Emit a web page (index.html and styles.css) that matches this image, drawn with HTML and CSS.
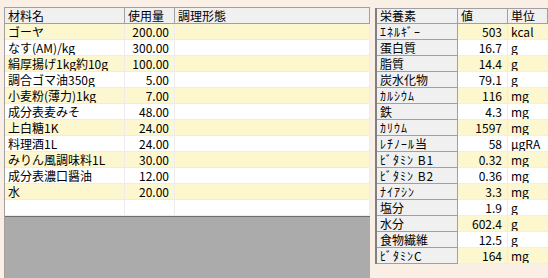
FILE: index.html
```html
<!DOCTYPE html>
<html lang="ja">
<head>
    <meta charset="UTF-8">
    <title>材料と栄養素</title>
    <link rel="stylesheet" href="styles.css">
</head>
<body>
    <div class="page">
        <div class="materials">
            <div class="mat-head">
                <div class="cell">材料名</div>
                <div class="cell">使用量</div>
                <div class="cell">調理形態</div>
            </div>
            <div class="mat-row alt"><div class="cell">ゴーヤ</div><div class="cell num">200.00</div><div class="cell"></div></div>
            <div class="mat-row"><div class="cell">なす(AM)/kg</div><div class="cell num">300.00</div><div class="cell"></div></div>
            <div class="mat-row alt"><div class="cell">絹厚揚げ1kg約10g</div><div class="cell num">100.00</div><div class="cell"></div></div>
            <div class="mat-row"><div class="cell">調合ゴマ油350g</div><div class="cell num">5.00</div><div class="cell"></div></div>
            <div class="mat-row alt"><div class="cell">小麦粉(薄力)1kg</div><div class="cell num">7.00</div><div class="cell"></div></div>
            <div class="mat-row"><div class="cell">成分表麦みそ</div><div class="cell num">48.00</div><div class="cell"></div></div>
            <div class="mat-row alt"><div class="cell">上白糖1K</div><div class="cell num">24.00</div><div class="cell"></div></div>
            <div class="mat-row"><div class="cell">料理酒1L</div><div class="cell num">24.00</div><div class="cell"></div></div>
            <div class="mat-row alt"><div class="cell">みりん風調味料1L</div><div class="cell num">30.00</div><div class="cell"></div></div>
            <div class="mat-row"><div class="cell">成分表濃口醤油</div><div class="cell num">12.00</div><div class="cell"></div></div>
            <div class="mat-row alt"><div class="cell">水</div><div class="cell num">20.00</div><div class="cell"></div></div>
            <div class="mat-row"><div class="cell"></div><div class="cell num"></div><div class="cell"></div></div>
            <div class="mat-blank"></div>
        </div>

        <div class="nutrients">
            <div class="nut-head">
                <div class="cell">栄養素</div>
                <div class="cell">値</div>
                <div class="cell">単位</div>
            </div>
            <div class="nut-row alt"><div class="cell name hw">ｴﾈﾙｷﾞｰ</div><div class="cell num">503</div><div class="cell">kcal</div></div>
            <div class="nut-row"><div class="cell name">蛋白質</div><div class="cell num">16.7</div><div class="cell">g</div></div>
            <div class="nut-row alt"><div class="cell name">脂質</div><div class="cell num">14.4</div><div class="cell">g</div></div>
            <div class="nut-row"><div class="cell name">炭水化物</div><div class="cell num">79.1</div><div class="cell">g</div></div>
            <div class="nut-row alt"><div class="cell name hw">ｶﾙｼｳﾑ</div><div class="cell num">116</div><div class="cell">mg</div></div>
            <div class="nut-row"><div class="cell name">鉄</div><div class="cell num">4.3</div><div class="cell">mg</div></div>
            <div class="nut-row alt"><div class="cell name hw">ｶﾘｳﾑ</div><div class="cell num">1597</div><div class="cell">mg</div></div>
            <div class="nut-row"><div class="cell name hw">ﾚﾁﾉｰﾙ当</div><div class="cell num">58</div><div class="cell">μgRA</div></div>
            <div class="nut-row alt"><div class="cell name hw">ﾋﾞﾀﾐﾝ B1</div><div class="cell num">0.32</div><div class="cell">mg</div></div>
            <div class="nut-row"><div class="cell name hw">ﾋﾞﾀﾐﾝ B2</div><div class="cell num">0.36</div><div class="cell">mg</div></div>
            <div class="nut-row alt"><div class="cell name hw">ﾅｲｱｼﾝ</div><div class="cell num">3.3</div><div class="cell">mg</div></div>
            <div class="nut-row"><div class="cell name">塩分</div><div class="cell num">1.9</div><div class="cell">g</div></div>
            <div class="nut-row alt"><div class="cell name">水分</div><div class="cell num">602.4</div><div class="cell">g</div></div>
            <div class="nut-row"><div class="cell name">食物繊維</div><div class="cell num">12.5</div><div class="cell">g</div></div>
            <div class="nut-row alt"><div class="cell name hw">ﾋﾞﾀﾐﾝC</div><div class="cell num">164</div><div class="cell">mg</div></div>
        </div>
    </div>
</body>
</html>
```

FILE: styles.css
```css
* {
    margin: 0;
    padding: 0;
    box-sizing: border-box;
}

body {
    background: #f9efe5;
    font-family: "MS UI Gothic", "Noto Sans CJK JP", sans-serif;
    font-size: 12px;
    color: #000;
}

.page {
    display: flex;
    gap: 5px;
    height: 278px;
    padding: 7px 0 0 4px;
    overflow: hidden;
}

.cell {
    height: 15px;
    line-height: 15px;
    padding: 0 3px;
    white-space: nowrap;
    overflow: hidden;
}

.num {
    text-align: right;
    padding-right: 5px;
}

.hw {
    letter-spacing: 1px;
}

/* materials list */

.materials {
    width: 366px;
    display: flex;
    flex-direction: column;
    border-left: 1px solid #a0a0a0;
    background: #fff;
}

.mat-head,
.mat-row {
    display: grid;
    grid-template-columns: 120px 50px 1fr;
}

.mat-head {
    background: #f0f0f0;
    border-top: 1px solid #a0a0a0;
    border-bottom: 1px solid #a0a0a0;
    border-right: 1px solid #a0a0a0;
}

.mat-head .cell {
    border-right: 1px solid #a0a0a0;
}

.mat-head .cell:last-child {
    border-right: none;
}

.mat-row {
    height: 16px;
    border-bottom: 1px solid #ececec;
    border-right: 1px solid #ececec;
}

.mat-row .cell {
    border-right: 1px solid #ececec;
}

.mat-row .cell:last-child {
    border-right: none;
}

.mat-row.alt {
    background: #fdf7d0;
}

.mat-blank {
    flex: 1;
    background: #ababab;
    border-top: 1px solid #6e6e6e;
}

/* nutrients table */

.nutrients {
    flex: 1;
    align-self: flex-start;
    margin-top: 1px;
    border-left: 2px solid #808080;
    background: #fff;
}

.nut-head,
.nut-row {
    display: grid;
    grid-template-columns: 81px 50px 1fr;
}

.nut-head {
    height: 16px;
    background: #f0f0f0;
    border-top: 1px solid #a0a0a0;
    border-bottom: 1px solid #a0a0a0;
}

.nut-head .cell {
    height: 14px;
    line-height: 14px;
    overflow: visible;
    border-right: 1px solid #a0a0a0;
}

.nut-row {
    height: 16px;
}

.nut-row .cell {
    border-bottom: 1px solid #efefef;
    height: 16px;
}

.nut-row .name {
    background: #f0f0f0;
    border-right: 1px solid #a0a0a0;
    border-bottom: 1px solid #a0a0a0;
}

.nut-row .num {
    border-right: 1px solid #ececec;
}

.nut-row.alt .num,
.nut-row.alt .cell:last-child {
    background: #fdf7d0;
}
```
